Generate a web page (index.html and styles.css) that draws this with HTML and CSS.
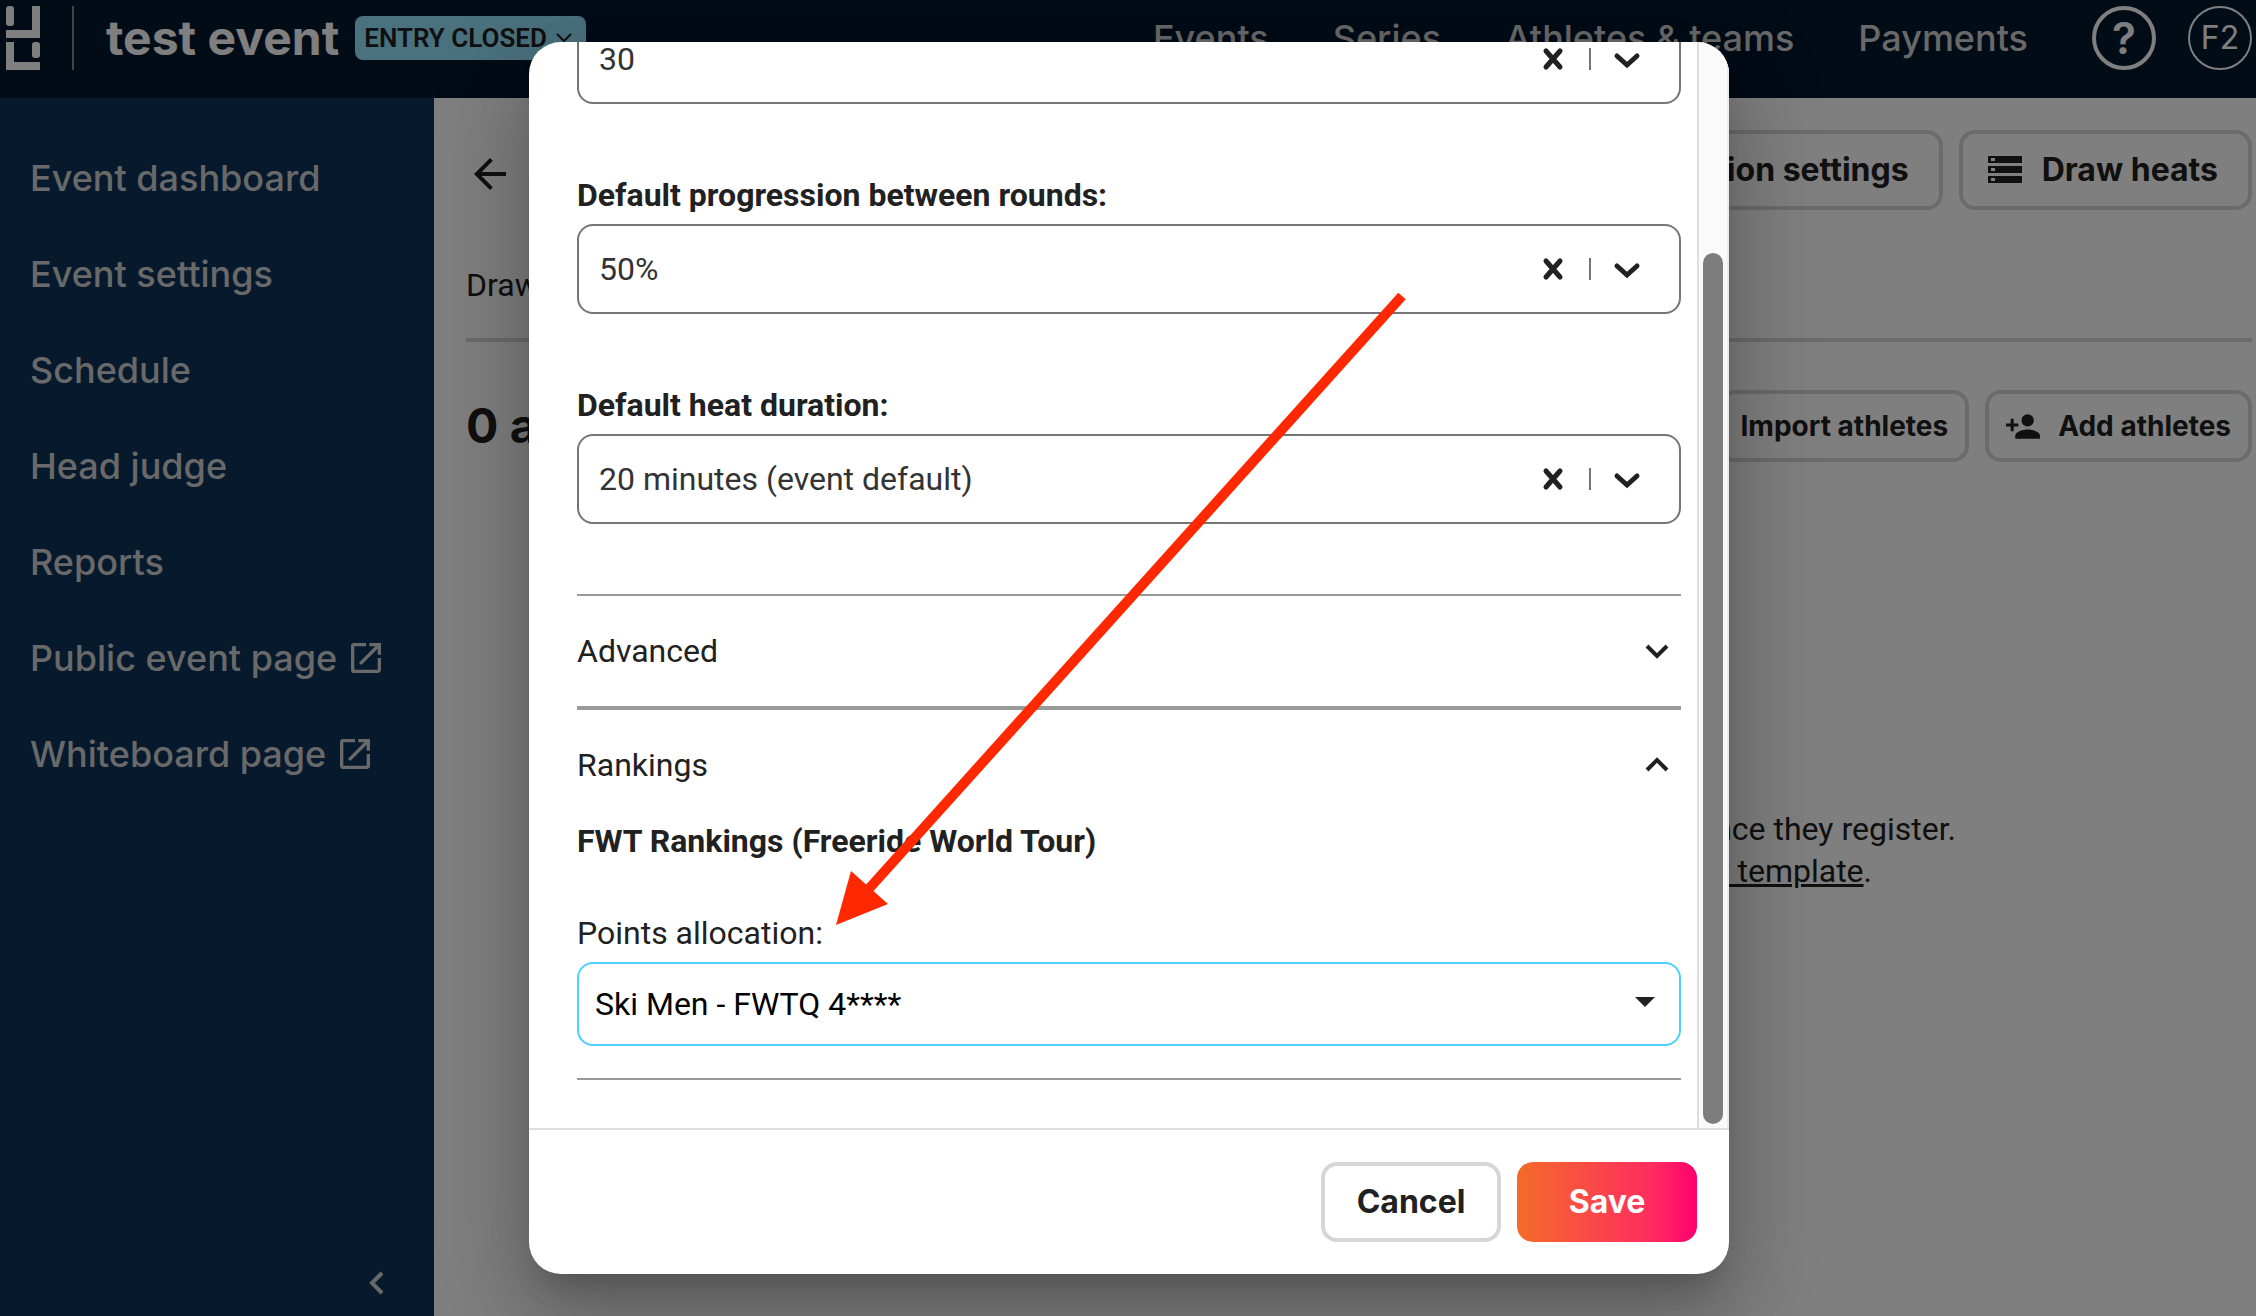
FILE: index.html
```html
<!DOCTYPE html>
<html lang="en">
<head>
<meta charset="utf-8">
<title>test event</title>
<link rel="stylesheet" href="styles.css">
</head>
<body>
<header class="topbar">
  <a class="logo" href="#" aria-label="Home">
    <svg width="34" height="64" viewBox="0 0 34 64" fill="currentColor"><rect width="8" height="20" rx="3"/><path d="M26 0h8v32H0v-8h26z"/><path d="M0 36h8v20h26v8H0z"/><rect x="26" y="36" width="8" height="16" rx="3"/></svg>
  </a>
  <span class="title">test event</span>
  <button class="badge">ENTRY CLOSED
    <svg width="16" height="10" viewBox="0 0 16 10" fill="none" stroke="currentColor" stroke-width="2"><path d="M1 1l7 7 7-7"/></svg>
  </button>
  <nav class="topnav">
    <a href="#">Events</a>
    <a href="#">Series</a>
    <a href="#">Athletes &amp; teams</a>
    <a href="#">Payments</a>
  </nav>
  <button class="round help" aria-label="Help">?</button>
  <button class="round user">F2</button>
</header>
<div class="layout">
  <aside class="sidebar">
    <nav class="sidenav">
      <a href="#">Event dashboard</a>
      <a href="#">Event settings</a>
      <a href="#">Schedule</a>
      <a href="#">Head judge</a>
      <a href="#">Reports</a>
      <a href="#">Public event page
        <svg width="30" height="30" viewBox="3 3 18 18" fill="currentColor"><path d="M19 19H5V5h7V3H5a2 2 0 0 0-2 2v14a2 2 0 0 0 2 2h14c1.100 0 2-.9 2-2v-7h-2v7zM14 3v2h3.590l-9.830 9.830 1.410 1.410L19 6.410V10h2V3h-7z"/></svg></a>
      <a href="#">Whiteboard page
        <svg width="30" height="30" viewBox="3 3 18 18" fill="currentColor"><path d="M19 19H5V5h7V3H5a2 2 0 0 0-2 2v14a2 2 0 0 0 2 2h14c1.100 0 2-.9 2-2v-7h-2v7zM14 3v2h3.590l-9.830 9.830 1.410 1.410L19 6.410V10h2V3h-7z"/></svg></a>
    </nav>
    <button class="collapse" aria-label="Collapse menu">
      <svg width="15" height="24" viewBox="0 0 15 24" fill="none" stroke="currentColor" stroke-width="4"><path d="M13 2L3 12l10 10"/></svg>
    </button>
  </aside>
  <main class="main">
    <div class="toolbar">
      <button class="back" aria-label="Back">
        <svg width="32" height="32" viewBox="4 4 16 16" fill="currentColor"><path d="M20 11H7.830l5.590-5.590L12 4l-8 8 8 8 1.410-1.410L7.830 13H20v-2z"/></svg>
      </button>
      <button class="btn">Division settings</button>
      <button class="btn">
        <svg width="34" height="28" viewBox="0 0 34 28" fill="currentColor" fill-rule="evenodd"><path d="M0 0h34v7H0zM3 2v3h4V2zM0 10h34v7H0zM3 12v3h4v-3zM0 20h34v7H0zM3 22v3h4v-3z"/></svg>
        Draw heats</button>
    </div>
    <div class="tabs"><a href="#">Draw</a></div>
    <div class="listhead">
      <h1>0 athletes</h1>
      <button class="btn small">Import athletes</button>
      <button class="btn small">
        <svg width="34" height="25" viewBox="1 4 22 16" fill="currentColor"><path d="M15 12a4 4 0 1 0 0-8 4 4 0 0 0 0 8zM6 10V7H4v3H1v2h3v3h2v-3h3v-2H6zM15 14c-2.670 0-8 1.340-8 4v2h16v-2c0-2.660-5.330-4-8-4z"/></svg>
        Add athletes</button>
    </div>
    <div class="empty">
      <p>Athletes will appear here once they register.</p>
      <p>Or you can import them from <a href="#">our template</a>.</p>
    </div>
  </main>
</div>
<div class="overlay">
  <div class="dialog" role="dialog" aria-modal="true" aria-label="Division settings">
    <div class="scroller">
      <form class="form" id="settings">
        <div class="field">
          <div class="combo"><input id="max" value="30" aria-label="Maximum athletes">
            <button type="button" aria-label="Clear"><svg width="20" height="22" viewBox="0 0 20 22"><path d="M3 3l14 16M17 3L3 19"/></svg></button><i></i>
            <button type="button" aria-label="Open"><svg width="24" height="20" viewBox="0 0 24 20"><path d="M2 7l10 9L22 7"/></svg></button></div>
        </div>
        <div class="field">
          <label for="prog">Default progression between rounds:</label>
          <div class="combo"><input id="prog" value="50%">
            <button type="button" aria-label="Clear"><svg width="20" height="22" viewBox="0 0 20 22"><path d="M3 3l14 16M17 3L3 19"/></svg></button><i></i>
            <button type="button" aria-label="Open"><svg width="24" height="20" viewBox="0 0 24 20"><path d="M2 7l10 9L22 7"/></svg></button></div>
        </div>
        <div class="field">
          <label for="dur">Default heat duration:</label>
          <div class="combo"><input id="dur" value="20 minutes (event default)">
            <button type="button" aria-label="Clear"><svg width="20" height="22" viewBox="0 0 20 22"><path d="M3 3l14 16M17 3L3 19"/></svg></button><i></i>
            <button type="button" aria-label="Open"><svg width="24" height="20" viewBox="0 0 24 20"><path d="M2 7l10 9L22 7"/></svg></button></div>
        </div>
        <button type="button" class="section">Advanced
          <svg width="24" height="16" viewBox="0 0 24 16"><path d="M2 3l10 10L22 3"/></svg></button>
        <div class="rankings">
          <button type="button" class="section open">Rankings
            <svg width="24" height="16" viewBox="0 0 24 16"><path d="M2 13L12 3l10 10"/></svg></button>
          <h2>FWT Rankings (Freeride World Tour)</h2>
          <label class="plain" for="points">Points allocation:</label>
          <div class="picker">
            <select id="points"><option>Ski Men - FWTQ 4****</option></select>
            <svg width="20" height="10" viewBox="0 0 20 10"><path d="M0 0h20L10 10z"/></svg>
          </div>
        </div>
      </form>
      <div class="track"><div class="thumb"></div></div>
    </div>
    <footer class="actions">
      <button class="btn cancel">Cancel</button>
      <button class="btn save" form="settings">Save</button>
    </footer>
  </div>
</div>
<svg class="arrow" width="572" height="634" viewBox="0 0 572 634" aria-hidden="true"><path d="M566 4L30 600" stroke="#ff2800" stroke-width="10"/><path d="M0 633L15 579 52 612z" fill="#ff2800"/></svg>
</body>
</html>
```
FILE: styles.css
```css
* { box-sizing: border-box; }
body {
  margin: 0;
  height: 100vh;
  display: flex;
  flex-direction: column;
  overflow: hidden;
  background: #fff;
  color: #212121;
  font: 32px/42px Roboto, sans-serif;
}
a { color: inherit; text-decoration: none; }
button, input, select { font: inherit; color: inherit; background: none; border: 0; padding: 0; }
svg { flex: none; }

.topbar {
  height: 98px;
  flex: none;
  display: flex;
  align-items: center;
  padding: 0 4px 22px 6px;
  background: #02182f;
  color: #fff;
  font-family: Inter, sans-serif;
}
.logo { display: flex; padding-right: 32px; border-right: 2px solid #808893; }
.title { margin: 0 16px 0 32px; font-size: 48px; font-weight: 700; }
.badge {
  height: 44px;
  padding: 0 14px 0 9px;
  display: flex;
  align-items: center;
  gap: 9px;
  border-radius: 8px;
  background: #94e2fd;
  color: #212121;
  font: 600 26px/44px Roboto, sans-serif;
}
.topnav { margin-left: auto; display: flex; gap: 64px; color: #d2d2d2; font-size: 36px; font-weight: 500; }
.round { width: 64px; height: 64px; border-radius: 50%; border: 2px solid #fff; font-size: 32px; }
.help { margin: 0 32px 0 64px; border-width: 4px; font-size: 44px; font-weight: 600; }

.layout { flex: 1; min-height: 0; display: flex; }
.sidebar {
  width: 434px;
  flex: none;
  display: flex;
  flex-direction: column;
  justify-content: space-between;
  padding: 56px 50px 18px 30px;
  background: #0e335b;
  color: #d2d2d2;
  font: 500 36px/48px Inter, sans-serif;
}
.sidenav { display: flex; flex-direction: column; gap: 48px; }
.sidenav a { display: flex; align-items: center; gap: 14px; white-space: nowrap; }
.collapse { align-self: flex-end; display: flex; padding: 3px 0; }

.main { flex: 1; min-width: 0; padding: 32px 4px 0 32px; }
.toolbar { display: flex; align-items: center; gap: 16px; padding-bottom: 48px; }
.back { display: flex; margin: 8px auto 0 8px; }
.btn {
  height: 80px;
  padding: 0 30px;
  display: flex;
  align-items: center;
  gap: 20px;
  border: 4px solid #d6d6d6;
  border-radius: 16px;
  font: 700 32px/40px Inter, sans-serif;
}
.toolbar .btn { padding: 0 30px 0 25px; }
.btn.small { height: 72px; padding: 0 17px; font-size: 28px; gap: 18px; }
.tabs { padding: 6px 0 32px; border-bottom: 4px solid #d6d6d6; margin-bottom: 48px; }
.listhead { display: flex; align-items: center; gap: 16px; }
.listhead h1 { margin: 0 auto 0 0; font: 700 48px/56px Inter, sans-serif; }
.empty { padding: 346px 296px 0 0; text-align: right; }
.empty p { margin: 0; }
.empty p + p { padding-right: 84px; }
.empty a { text-decoration: underline; }

.overlay {
  position: absolute;
  inset: 0;
  display: flex;
  justify-content: center;
  align-items: center;
  padding-left: 2px;
  background: rgba(0, 0, 0, .5);
}
.dialog {
  width: 1200px;
  max-height: calc(100vh - 84px);
  display: flex;
  flex-direction: column;
  overflow: hidden;
  border-radius: 32px;
  background: #fff;
  box-shadow: 0 22px 30px -14px rgba(0, 0, 0, .2), 0 48px 76px 6px rgba(0, 0, 0, .14), 0 18px 92px 16px rgba(0, 0, 0, .12);
}
.scroller { height: 1086px; min-height: 0; display: flex; align-items: stretch; overflow: hidden; }
.form {
  flex: 1;
  min-width: 0;
  display: flex;
  flex-direction: column;
  justify-content: flex-end;
  padding: 0 16px 48px 48px;
}
.form > * { flex: none; }
.field { padding-bottom: 70px; }
.field label { display: block; padding-bottom: 8px; font-weight: 700; }
.combo {
  height: 90px;
  display: flex;
  align-items: center;
  padding: 0 40px 0 20px;
  border: 2px solid #757575;
  border-radius: 16px;
}
.combo input { flex: 1; min-width: 0; color: #333; }
.combo button { display: flex; }
.combo i { width: 2px; height: 22px; margin: 0 24px 0 26px; background: #757575; }
.combo svg, .section svg { fill: none; stroke: #212121; stroke-width: 4; }
.combo svg { stroke-width: 5; stroke-linecap: round; overflow: visible; }
.section {
  width: 100%;
  height: 114px;
  display: flex;
  align-items: center;
  justify-content: space-between;
  padding-right: 12px;
  border-top: 2px solid #999;
  border-bottom: 2px solid #999;
}
.rankings { border-top: 2px solid #999; border-bottom: 2px solid #999; padding-bottom: 32px; }
.section.open { height: 110px; border: 0; }
.rankings h2 { margin: 0 0 50px; font-size: 32px; line-height: 42px; }
.plain { display: block; padding-bottom: 8px; }
.picker { display: grid; align-items: center; }
.picker select {
  grid-area: 1 / 1;
  height: 84px;
  padding: 0 60px 0 16px;
  appearance: none;
  border: 2px solid #4dd0ff;
  border-radius: 16px;
  color: #000;
}
.picker svg { grid-area: 1 / 1; justify-self: end; margin: 0 26px 4px 0; fill: #212121; }
.track {
  width: 32px;
  flex: none;
  display: flex;
  flex-direction: column;
  justify-content: flex-end;
  padding: 4px;
  border-left: 2px solid #dedede;
  border-right: 2px solid #ececec;
  background: #fafafa;
}
.thumb { height: 871px; border-radius: 11px; background: #7d7d7d; }
.actions {
  display: flex;
  justify-content: flex-end;
  gap: 16px;
  padding: 32px;
  border-top: 2px solid #dedede;
}
.actions .btn { width: 180px; justify-content: center; padding: 0; }
.save { border: 0; color: #fff; background: linear-gradient(90deg, #f46b2a, #ff2d5f 75%, #ff006e); }
.arrow { position: absolute; left: 836px; top: 292px; pointer-events: none; }
```
